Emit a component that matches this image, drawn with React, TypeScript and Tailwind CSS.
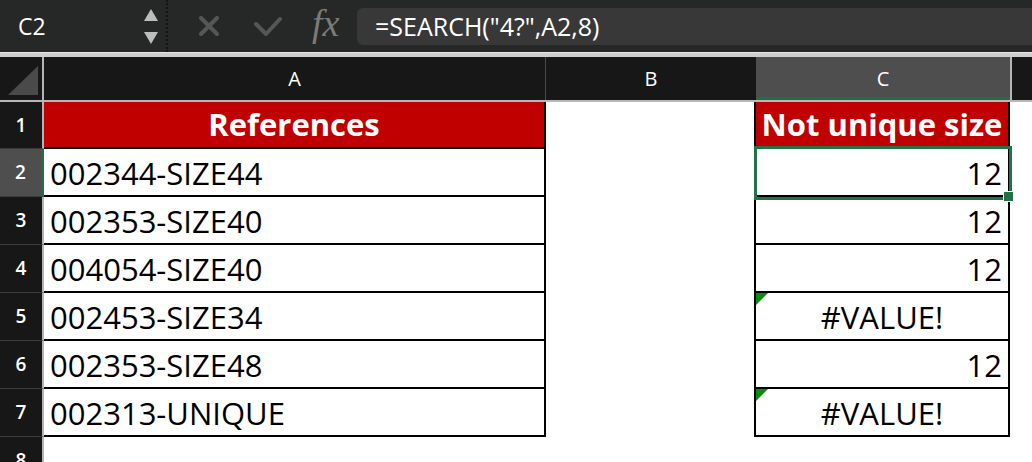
import React from "react";

const cols = "grid grid-cols-[44px_502px_210px_254px_1fr]";

type Row = { n: number; a: string; c: string; kind: "num" | "err" };

const rows: Row[] = [
    { n: 2, a: "002344-SIZE44", c: "12", kind: "num" },
    { n: 3, a: "002353-SIZE40", c: "12", kind: "num" },
    { n: 4, a: "004054-SIZE40", c: "12", kind: "num" },
    { n: 5, a: "002453-SIZE34", c: "#VALUE!", kind: "err" },
    { n: 6, a: "002353-SIZE48", c: "12", kind: "num" },
    { n: 7, a: "002313-UNIQUE", c: "#VALUE!", kind: "err" },
];

const ErrorMark = () => (
    <svg className="absolute left-0 top-0" width="12" height="12" viewBox="0 0 12 12">
        <polygon points="0,0 12,0 0,12" fill="#0b8a0b" />
    </svg>
);

const RowHead = ({ n, selected }: { n: number; selected?: boolean }) => (
    <div
        className={
            selected
                ? "flex items-center justify-center bg-[#4e4e4e] border-r-[3px] border-[#1f7145] border-b border-b-[#3a3a3a] text-white text-[19px] font-semibold"
                : "flex items-center justify-center bg-[#171717] border-r-2 border-[#b5b5b5] border-b border-b-[#3a3a3a] text-white text-[19px] font-semibold"
        }
    >
        {n}
    </div>
);

export default function App() {
    return (
        <div className="w-[1032px] h-[462px] overflow-hidden bg-white font-['Open_Sans',sans-serif]">
            {/* formula bar */}
            <div className="flex h-[52px] bg-[#262727]">
                <div className="w-[166px] flex items-center justify-between pl-[18px] pr-[8px]">
                    <span className="text-white text-[23px] leading-none">C2</span>
                    <div className="flex flex-col gap-[11px]">
                        <svg width="14" height="12" viewBox="0 0 14 12">
                            <polygon points="0,12 7,0 14,12" fill="#bdbdbd" />
                        </svg>
                        <svg width="14" height="12" viewBox="0 0 14 12">
                            <polygon points="0,0 14,0 7,12" fill="#bdbdbd" />
                        </svg>
                    </div>
                </div>
                <div className="w-[2px] border-l-2 border-dotted border-[#141414]" />
                <div className="w-[189px] flex items-center">
                    <svg className="ml-[31px]" width="20" height="20" viewBox="0 0 20 20">
                        <path d="M2 2 L18 18 M18 2 L2 18" stroke="#565656" strokeWidth="4" strokeLinecap="round" />
                    </svg>
                    <svg className="ml-[35px]" width="28" height="20" viewBox="0 0 28 20">
                        <path d="M2 8 L12 18 L26 3" stroke="#565656" strokeWidth="4" fill="none" strokeLinecap="round" strokeLinejoin="round" />
                    </svg>
                    <span className="ml-[30px] font-['Liberation_Serif',serif] italic text-[#7b7b7b] text-[38px] leading-none -mt-[6px]">
                        fx
                    </span>
                </div>
                <div className="flex-1 mt-[8px] mb-[7px] bg-[#383838] rounded-l-[6px] flex items-center pl-[18px]">
                    <span className="text-white text-[25px] leading-none">=SEARCH("4?",A2,8)</span>
                </div>
            </div>
            <div className="h-[5px] bg-[#cfcfcf] border-t border-[#e6e6e6]" />

            {/* column headers */}
            <div className={`${cols} h-[45px] border-b-2 border-[#b8b8b8] bg-[#171717] text-white text-[20px]`}>
                <div className="border-r-2 border-[#b5b5b5] flex items-end justify-end pr-[4px] pb-[5px]">
                    <svg width="30" height="29" viewBox="0 0 30 29">
                        <polygon points="0,29 30,0 30,29" fill="#4a4a4a" />
                    </svg>
                </div>
                <div className="flex items-center justify-center border-r border-[#4a4a4a]">A</div>
                <div className="flex items-center justify-center">B</div>
                <div className="flex items-center justify-center bg-[#4e4e4e] border-b-[3px] border-[#1f7145] pt-[3px]">C</div>
                <div className="border-l-2 border-[#b5b5b5]" />
            </div>

            {/* row 1 */}
            <div className={`${cols} h-[47px]`}>
                <RowHead n={1} />
                <div className="bg-[#c00000] border-r-2 border-b-2 border-black flex items-center justify-center text-white font-bold text-[31px] leading-none">
                    References
                </div>
                <div className="border-r-2 border-black" />
                <div className="bg-[#c00000] border-r-2 border-b-2 border-black flex items-center justify-center text-white font-bold text-[31px] leading-none whitespace-nowrap">
                    Not unique size
                </div>
                <div />
            </div>

            {rows.map((r) => (
                <div key={r.n} className={`${cols} h-[48px]`}>
                    <RowHead n={r.n} selected={r.n === 2} />
                    <div className="border-r-2 border-b-2 border-black flex items-center pl-[6px] pt-[2px] text-black text-[31px] leading-none">
                        {r.a}
                    </div>
                    <div className="border-r-2 border-black" />
                    <div
                        className={
                            r.kind === "num"
                                ? "relative border-r-2 border-b-2 border-black flex items-center justify-end pr-[6px] pt-[2px] text-black text-[31px] leading-none"
                                : "relative border-r-2 border-b-2 border-black flex items-center justify-center pt-[2px] text-black text-[31px] leading-none"
                        }
                    >
                        {r.kind === "err" && <ErrorMark />}
                        {r.c}
                        {r.n === 2 && (
                            <>
                                <div className="absolute -left-[2px] -top-[3px] -right-[4px] -bottom-[5px] border-[3px] border-[#217346] z-10" />
                                <div className="absolute -right-[6px] -bottom-[7px] w-[11px] h-[11px] bg-[#217346] border border-white z-20" />
                            </>
                        )}
                    </div>
                    <div />
                </div>
            ))}

            {/* row 8 */}
            <div className={`${cols} h-[48px]`}>
                <RowHead n={8} />
                <div />
                <div />
                <div />
                <div />
            </div>
        </div>
    );
}
